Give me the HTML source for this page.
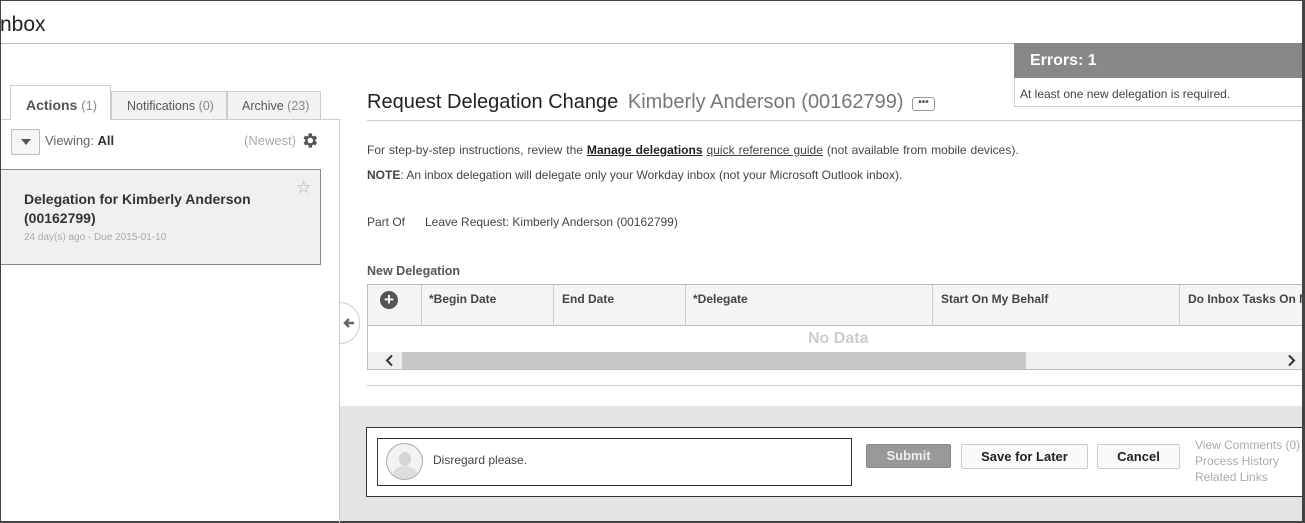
<!DOCTYPE html>
<html><head><meta charset="utf-8"><style>
*{box-sizing:border-box;margin:0;padding:0}
body{width:1305px;height:523px;overflow:hidden;background:#fff;font-family:"Liberation Sans",Arial,sans-serif;color:#333;position:relative}
.a{position:absolute;white-space:nowrap}
</style></head><body>
<div class="a" style="left:0;top:0;width:1305px;height:523px;border:1px solid #444;border-right:3px solid #444;border-bottom:2px solid #444"></div>
<div class="a" style="left:0;top:13px;font-size:21px;color:#222">nbox</div>
<div class="a" style="left:1px;top:43px;width:1302px;height:1px;background:#bbb"></div>

<div class="a" style="left:10px;top:85px;width:101px;height:35px;border:1px solid #ccc;border-bottom:none;background:#fff;font-size:14px;padding:11px 0 0 15px"><b style="color:#555">Actions</b> <span style="color:#888;font-size:13px">(1)</span></div>
<div class="a" style="left:111px;top:91px;width:116px;height:29px;border:1px solid #ccc;background:#f2f2f2;font-size:12.5px;color:#555;padding:7px 0 0 15px">Notifications <span style="color:#888">(0)</span></div>
<div class="a" style="left:227px;top:91px;width:94px;height:29px;border:1px solid #ccc;background:#f2f2f2;font-size:12.5px;color:#555;padding:7px 0 0 14px">Archive <span style="color:#888">(23)</span></div>
<div class="a" style="left:1px;top:119px;width:339px;height:1px;background:#ccc"></div>
<div class="a" style="left:11px;top:119px;width:99px;height:1px;background:#fff"></div>
<div class="a" style="left:339px;top:119px;width:1px;height:404px;background:#ccc"></div>
<div class="a" style="left:11px;top:129px;width:29px;height:26px;border:1px solid #bbb;background:#f6f6f6;border-radius:2px"></div>
<div class="a" style="left:21px;top:139px;width:0;height:0;border-left:5px solid transparent;border-right:5px solid transparent;border-top:6px solid #555"></div>
<div class="a" style="left:45px;top:133px;font-size:13px;color:#666">Viewing: <b style="color:#333">All</b></div>
<div class="a" style="left:244px;top:133px;font-size:13px;color:#aaa">(Newest)</div>
<svg class="a" style="left:300px;top:131px" width="19" height="19" viewBox="0 0 24 24"><path fill="#555" d="M19.4 13a7.5 7.5 0 0 0 0-2l2.1-1.6-2-3.5-2.5 1a7 7 0 0 0-1.700-1L15 3h-4l-.4 2.9a7 7 0 0 0-1.7 1l-2.5-1-2 3.5L6.6 11a7.5 7.5 0 0 0 0 2l-2.1 1.6 2 3.5 2.5-1a7 7 0 0 0 1.7 1L11 21h4l.4-2.9a7 7 0 0 0 1.7-1l2.5 1 2-3.5zM13 15.5a3.5 3.5 0 1 1 0-7 3.5 3.5 0 0 1 0 7z"/></svg>
<div class="a" style="left:1px;top:169px;width:320px;height:96px;border:1px solid #888;border-left:none;background:#f0f0f0"></div>
<div class="a" style="left:24px;top:190px;font-size:14px;font-weight:bold;color:#333;line-height:19px;white-space:normal;width:260px">Delegation for Kimberly Anderson (00162799)</div>
<div class="a" style="left:24px;top:232px;font-size:10px;color:#aaa">24 day(s) ago - Due 2015-01-10</div>
<div class="a" style="left:296px;top:178px;font-size:17px;color:#aaa">☆</div>

<div class="a" style="left:340px;top:302px;width:20px;height:42px;border:1px solid #ccc;border-left:none;border-radius:0 21px 21px 0;background:#fff"></div>
<svg class="a" style="left:342px;top:316px" width="14" height="14" viewBox="0 0 14 14"><path d="M12 7H4M7 3L3 7l4 4" stroke="#666" stroke-width="2.5" fill="none"/></svg>

<div class="a" style="left:367px;top:91px;font-size:20px;color:#222">Request Delegation Change <span style="color:#777;margin-left:4px">Kimberly Anderson (00162799)</span></div>
<div class="a" style="left:912px;top:97px;width:23px;height:14px;border:1px solid #999;border-radius:3px;font-size:10px;color:#555;text-align:center;line-height:9px;font-weight:bold">•••</div>
<div class="a" style="left:367px;top:120px;width:937px;height:1px;background:#ccc"></div>
<div class="a" style="left:367px;top:143px;font-size:12px;color:#444;letter-spacing:.02px;word-spacing:.6px">For step-by-step instructions, review the <b style="text-decoration:underline;color:#222">Manage delegations</b> <u>quick reference guide</u> (not available from mobile devices).</div>
<div class="a" style="left:367px;top:168px;font-size:12px;color:#444"><b>NOTE</b>: An inbox delegation will delegate only your Workday inbox (not your Microsoft Outlook inbox).</div>
<div class="a" style="left:367px;top:215px;font-size:12px;color:#444">Part Of</div>
<div class="a" style="left:425px;top:215px;font-size:12px;color:#444">Leave Request: Kimberly Anderson (00162799)</div>
<div class="a" style="left:367px;top:264px;font-size:12.5px;font-weight:bold;color:#555">New Delegation</div>

<div class="a" style="left:367px;top:284px;width:938px;height:86px;border:1px solid #bbb;border-right:none"></div>
<div class="a" style="left:368px;top:285px;width:937px;height:41px;background:#f5f5f5;border-bottom:1px solid #bbb"></div>
<div class="a" style="left:421px;top:285px;width:1px;height:41px;background:#ccc"></div>
<div class="a" style="left:553px;top:285px;width:1px;height:41px;background:#ccc"></div>
<div class="a" style="left:685px;top:285px;width:1px;height:41px;background:#ccc"></div>
<div class="a" style="left:932px;top:285px;width:1px;height:41px;background:#ccc"></div>
<div class="a" style="left:1179px;top:285px;width:1px;height:41px;background:#ccc"></div>
<div class="a" style="left:380px;top:291px;width:18px;height:18px;border-radius:50%;background:#555;color:#fff;font-size:17px;font-weight:bold;text-align:center;line-height:18px">+</div>
<div class="a" style="left:429px;top:292px;font-size:12px;font-weight:bold;color:#444">*Begin Date</div>
<div class="a" style="left:562px;top:292px;font-size:12px;font-weight:bold;color:#444">End Date</div>
<div class="a" style="left:693px;top:292px;font-size:12px;font-weight:bold;color:#444">*Delegate</div>
<div class="a" style="left:941px;top:292px;font-size:12px;font-weight:bold;color:#444">Start On My Behalf</div>
<div class="a" style="left:1188px;top:292px;font-size:12px;font-weight:bold;color:#444">Do Inbox Tasks On M</div>
<div class="a" style="left:808px;top:330px;font-size:16px;font-weight:bold;color:#ccc">No Data</div>
<div class="a" style="left:368px;top:352px;width:937px;height:17px;background:#efefef"></div>
<div class="a" style="left:402px;top:352px;width:624px;height:17px;background:#c8c8c8"></div>
<svg class="a" style="left:384px;top:354px" width="10" height="13" viewBox="0 0 10 13"><path d="M8 1.5L3 6.5l5 5" stroke="#333" stroke-width="2" fill="none"/></svg>
<svg class="a" style="left:1287px;top:354px" width="10" height="13" viewBox="0 0 10 13"><path d="M2 1.5l5 5-5 5" stroke="#333" stroke-width="2" fill="none"/></svg>
<div class="a" style="left:367px;top:385px;width:938px;height:1px;background:#ccc"></div>

<div class="a" style="left:340px;top:406px;width:963px;height:115px;background:#e4e4e4"></div>
<div class="a" style="left:366px;top:427px;width:937px;height:70px;background:#fff;border:1px solid #333;border-right:none"></div>
<div class="a" style="left:377px;top:438px;width:475px;height:48px;border:1px solid #333"></div>
<div class="a" style="left:386px;top:443px;width:37px;height:37px;border-radius:50%;border:1px solid #aaa;background:#f3f3f3;overflow:hidden">
<div style="position:absolute;left:12px;top:8px;width:12px;height:14px;border-radius:50%;background:#d5d5d5"></div>
<div style="position:absolute;left:6px;top:22px;width:24px;height:16px;border-radius:50% 50% 0 0;background:#ddd"></div></div>
<div class="a" style="left:433px;top:453px;font-size:12px;color:#444">Disregard please.</div>
<div class="a" style="left:866px;top:444px;width:85px;height:24px;background:#999;border:1px solid #888;border-radius:2px;color:#eee;font-size:13px;font-weight:bold;text-align:center;line-height:22px">Submit</div>
<div class="a" style="left:961px;top:444px;width:127px;height:25px;background:#fafafa;border:1px solid #ccc;border-radius:2px;color:#222;font-size:13px;font-weight:bold;text-align:center;line-height:23px">Save for Later</div>
<div class="a" style="left:1097px;top:444px;width:83px;height:25px;background:#fafafa;border:1px solid #ccc;border-radius:2px;color:#222;font-size:13px;font-weight:bold;text-align:center;line-height:23px">Cancel</div>
<div class="a" style="left:1195px;top:437px;font-size:12px;color:#aaa;line-height:16px">View Comments (0)<br>Process History<br>Related Links</div>

<div class="a" style="left:1014px;top:43px;width:291px;height:64px;border:1px solid #ccc;background:#fff"></div>
<div class="a" style="left:1014px;top:43px;width:291px;height:35px;background:#888"></div>
<div class="a" style="left:1030px;top:52px;font-size:16px;font-weight:bold;color:#fff">Errors: 1</div>
<div class="a" style="left:1020px;top:87px;font-size:12px;color:#444">At least one new delegation is required.</div>
<div class="a" style="left:1302px;top:0;width:3px;height:523px;background:#444"></div>
</body></html>
